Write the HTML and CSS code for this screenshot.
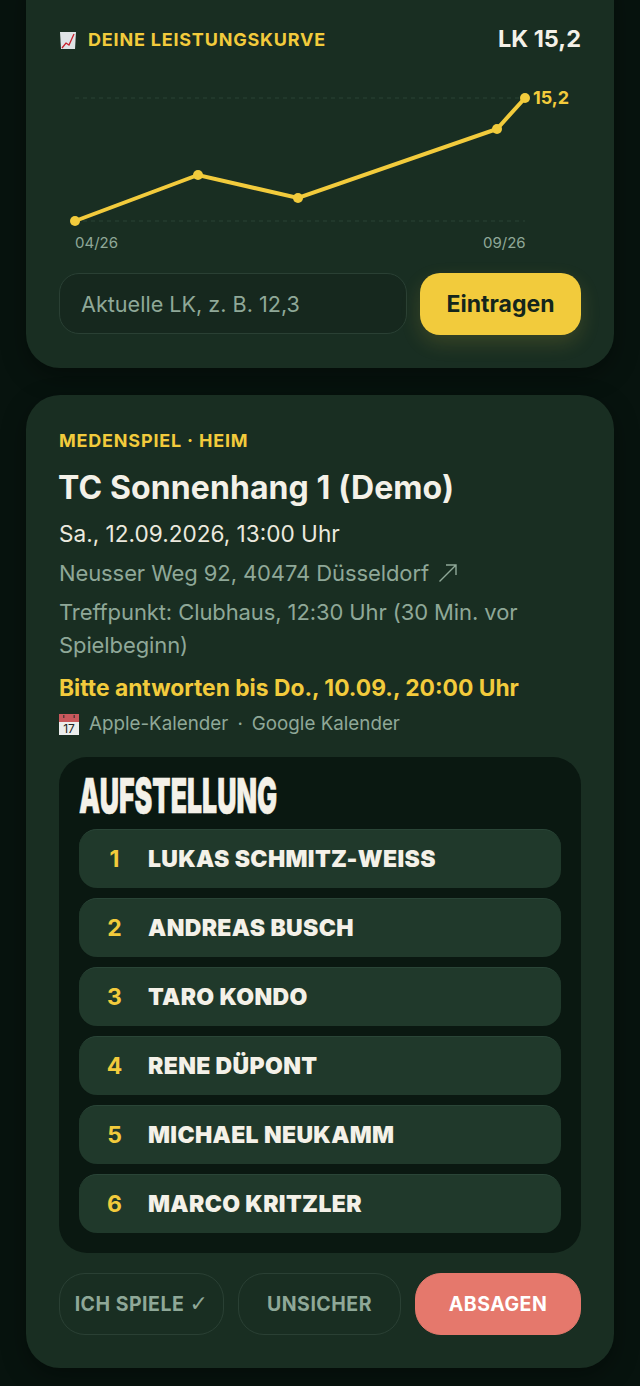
FILE: index.html
```html
<!DOCTYPE html>
<html lang="de">
<head>
  <meta charset="UTF-8">
  <title>Aufstellung</title>
  <link rel="stylesheet" href="styles.css">
</head>
<body>
  <div class="page">
    <section class="card card-chart">
      <div class="chart-head">
        <div class="eyebrow chart-title">
          <svg class="emoji-chart" viewBox="0 0 18 19" width="18" height="19">
            <path d="M1 1 H17 L16 18 H2 Z" fill="#dfe3e6"/>
            <path d="M3 17 L7 12 L10 14 L15 3" fill="none" stroke="#c8202c" stroke-width="1.3"/>
          </svg>
          <span>DEINE LEISTUNGSKURVE</span>
        </div>
        <div class="lk-value">LK 15,2</div>
      </div>
      <svg class="chart" viewBox="0 0 522 185" width="522" height="185">
        <line class="grid" x1="16" y1="22" x2="466" y2="22"/>
        <line class="grid" x1="16" y1="145" x2="466" y2="145"/>
        <polyline class="curve" points="16,145 139,99 239,122 438,53 466,22"/>
        <circle class="dot" cx="16" cy="145" r="5"/>
        <circle class="dot" cx="139" cy="99" r="5"/>
        <circle class="dot" cx="239" cy="122" r="5"/>
        <circle class="dot" cx="438" cy="53" r="5"/>
        <circle class="dot" cx="466" cy="22" r="5"/>
        <text class="last-label" x="474" y="28">15,2</text>
        <text class="axis" x="16" y="172">04/26</text>
        <text class="axis" x="424" y="172">09/26</text>
      </svg>
      <div class="lk-form">
        <input class="lk-input" type="text" placeholder="Aktuelle LK, z. B. 12,3">
        <button class="btn-save">Eintragen</button>
      </div>
    </section>

    <section class="card card-match">
      <div class="eyebrow">MEDENSPIEL · HEIM</div>
      <h2 class="match-title">TC Sonnenhang 1 (Demo)</h2>
      <div class="match-date">Sa., 12.09.2026, 13:00 Uhr</div>
      <div class="match-info">Neusser Weg 92, 40474 Düsseldorf
        <svg class="link-arrow" viewBox="0 0 20 20" width="20" height="20">
          <path d="M1.5 18.5 L18 2 M8 2 H18 V12" fill="none" stroke="#8fa898" stroke-width="1.4"/>
        </svg>
      </div>
      <div class="match-info">Treffpunkt: Clubhaus, 12:30 Uhr (30 Min. vor Spielbeginn)</div>
      <div class="deadline">Bitte antworten bis Do., 10.09., 20:00 Uhr</div>
      <div class="calendar">
        <svg class="emoji-cal" viewBox="0 0 20 21" width="20" height="21">
          <rect x="0" y="0" width="20" height="21" fill="#eceded"/>
          <rect x="0" y="0" width="20" height="8" fill="#c9585c"/>
          <rect x="4" y="1" width="1.5" height="3" fill="#5a3a3a"/>
          <rect x="14.5" y="1" width="1.5" height="3" fill="#5a3a3a"/>
          <text x="10" y="19" text-anchor="middle" class="cal-day">17</text>
        </svg>
        <span>Apple-Kalender</span>
        <span>·</span>
        <span>Google Kalender</span>
      </div>

      <div class="lineup">
        <h3 class="lineup-title">AUFSTELLUNG</h3>
        <div class="player"><span class="player-no">1</span><span class="player-name">LUKAS SCHMITZ-WEISS</span></div>
        <div class="player"><span class="player-no">2</span><span class="player-name">ANDREAS BUSCH</span></div>
        <div class="player"><span class="player-no">3</span><span class="player-name">TARO KONDO</span></div>
        <div class="player"><span class="player-no">4</span><span class="player-name">RENE DÜPONT</span></div>
        <div class="player"><span class="player-no">5</span><span class="player-name">MICHAEL NEUKAMM</span></div>
        <div class="player"><span class="player-no">6</span><span class="player-name">MARCO KRITZLER</span></div>
      </div>

      <div class="answers">
        <button class="btn-answer btn-play">ICH SPIELE <span class="check">✓</span></button>
        <button class="btn-answer btn-maybe">UNSICHER</button>
        <button class="btn-answer btn-cancel">ABSAGEN</button>
      </div>
    </section>
  </div>
</body>
</html>
```

FILE: styles.css
```css
html, body {
  margin: 0;
  height: 1386px;
  overflow: hidden;
}

body {
  font-family: Inter, 'Noto Sans', sans-serif;
  background: #07130e;
  color: #f4f1e8;
}

.page {
  display: flex;
  flex-direction: column;
  gap: 27px;
  padding: 0 26px;
}

.card {
  background: #192e22;
  border-radius: 34px;
  padding: 33px;
  box-shadow: 0 8px 24px rgba(0,0,0,0.35);
}

.card-chart {
  margin-top: -34px;
  padding-top: 61px;
}

.card-match {
  padding-top: 35px;
}

.eyebrow {
  color: #f2cb3c;
  font-size: 18px;
  font-weight: 700;
  letter-spacing: 0.8px;
  line-height: 22px;
}

.chart-head {
  display: flex;
  justify-content: space-between;
  align-items: center;
  height: 26px;
}

.chart-title {
  display: flex;
  align-items: center;
  gap: 11px;
}

.lk-value {
  font-size: 23.5px;
  font-weight: 700;
  line-height: 24px;
  margin-bottom: 2px;
}

.chart {
  display: block;
  margin-top: 23px;
}

.grid {
  stroke: #2a4234;
  stroke-width: 1;
  stroke-dasharray: 4 4;
}

.curve {
  fill: none;
  stroke: #f2cb3c;
  stroke-width: 4;
}

.dot {
  fill: #f2cb3c;
}

.last-label {
  fill: #f2cb3c;
  font-size: 18px;
  font-weight: 700;
}

.axis {
  fill: #8fa898;
  font-size: 15px;
}

.lk-form {
  display: flex;
  gap: 13px;
  margin-top: 12px;
}

.lk-input {
  flex: 1;
  min-width: 0;
  height: 61px;
  box-sizing: border-box;
  padding: 0 21px;
  background: #16281e;
  border: 1px solid #2a4034;
  border-radius: 20px;
  font-family: inherit;
  font-size: 21.6px;
  color: #f4f1e8;
}

.lk-input::placeholder {
  color: #8fa898;
  opacity: 1;
}

.btn-save {
  width: 161px;
  height: 62px;
  border: none;
  border-radius: 20px;
  background: #f2cb3c;
  color: #14261c;
  font-family: inherit;
  font-size: 23px;
  font-weight: 700;
  box-shadow: 0 8px 20px rgba(242,203,60,0.15);
}

.match-title {
  margin: 16px 0 0 -1px;
  font-size: 32px;
  font-weight: 700;
  letter-spacing: 0.1px;
  line-height: 40px;
}

.match-date {
  margin-top: 9px;
  font-size: 22.6px;
  line-height: 33px;
  color: #ebe9de;
}

.match-info {
  margin-top: 6px;
  font-size: 22px;
  letter-spacing: -0.1px;
  line-height: 33px;
  color: #8fa898;
}

.match-date + .match-info {
  margin-top: 7px;
}

.link-arrow {
  vertical-align: -2px;
  margin-left: 3px;
}

.deadline {
  margin-top: 9px;
  font-size: 22.8px;
  font-weight: 700;
  line-height: 33px;
  color: #f2cb3c;
}

.calendar {
  display: flex;
  align-items: center;
  gap: 9px;
  margin-top: 8px;
  font-size: 18.8px;
  line-height: 24px;
  color: #8fa898;
}

.emoji-cal {
  margin-right: 1px;
}

.cal-day {
  font-size: 12px;
  fill: #222;
}

.lineup {
  display: flex;
  flex-direction: column;
  gap: 10px;
  margin-top: 21px;
  padding: 20px;
  background: #0a1811;
  border-radius: 28px;
}

.lineup-title {
  margin: 0 0 4px;
  font-size: 48px;
  font-weight: 900;
  line-height: 38px;
  transform: scaleX(0.556);
  transform-origin: left center;
  -webkit-text-stroke: 0.5px #f4f1e8;
  white-space: nowrap;
  color: #f4f1e8;
}

.player {
  display: flex;
  align-items: center;
  height: 59px;
  box-sizing: border-box;
  background: #20392b;
  border-top: 1px solid #2a4537;
  border-radius: 18px;
}

.player-no {
  width: 71px;
  text-align: center;
  font-size: 23px;
  font-weight: 700;
  color: #f2cb3c;
}

.player-name {
  margin-left: -2px;
  font-size: 23px;
  font-weight: 900;
  letter-spacing: 0.35px;
  color: #f4f1e8;
}

.answers {
  display: flex;
  gap: 14px;
  margin-top: 20px;
}

.btn-answer {
  height: 62px;
  box-sizing: border-box;
  border-radius: 26px;
  background: transparent;
  border: 1px solid #2a4034;
  color: #8fa898;
  font-family: inherit;
  font-size: 19.5px;
  font-weight: 700;
  letter-spacing: 0.5px;
  white-space: nowrap;
  padding: 0;
}

.check {
  font-family: 'DejaVu Sans', sans-serif;
  font-size: 22px;
  line-height: 20px;
}

.btn-play {
  width: 165px;
}

.btn-maybe {
  width: 163px;
}

.btn-cancel {
  flex: 1;
  background: #e5786c;
  border-color: #e5786c;
  color: #fff;
}
```
